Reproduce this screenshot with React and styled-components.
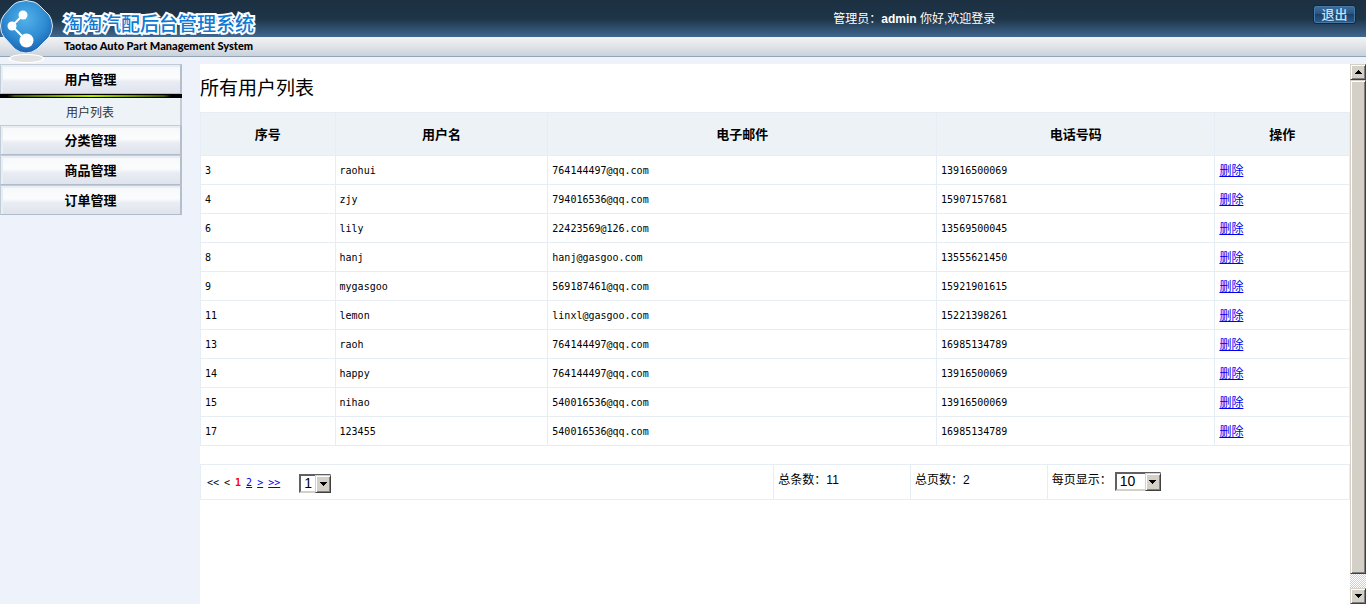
import React from 'react';
import styled, { createGlobalStyle, css } from 'styled-components';

const sans = '"Liberation Sans", "Noto Sans CJK SC", sans-serif';
const mono = '"DejaVu Sans Mono", "Noto Sans CJK SC", monospace';
const line = '#e6edf5';

const GlobalStyle = createGlobalStyle`
  *, *::before, *::after { box-sizing: border-box; }
  body { margin: 0; background: #eef2fb; color: #000; font: 12px/16px ${sans}; }
  a { color: #0000ee; }
`;

const Page = styled.div`
  display: flex;
  flex-direction: column;
  min-height: 100vh;
`;

const Header = styled.header`
  display: flex;
  align-items: flex-start;
  height: 57px;
  margin-bottom: 7px;
  border-bottom: 1px solid #93a3b3;
  background:
    linear-gradient(#1c3042, #1e3447 50%, #3f678f) 0 0 / 100% 37px no-repeat,
    linear-gradient(#f2f2f1, #e0e4e9 50%, #c9d1db) 0 37px / 100% 19px no-repeat;
`;

const Brand = styled.div`
  display: flex;
  flex: 0 0 61%;
  gap: 10px;
`;

const LogoMark = styled.svg`
  flex: none;
  width: 54px;
  height: 63px;
`;

const BrandText = styled.div`
  padding-top: 11px;
`;

const BrandName = styled.div`
  color: #0f7ad4;
  font: 500 19px/24px "Noto Sans CJK SC", sans-serif;
  -webkit-text-stroke: 4px #fff;
  paint-order: stroke fill;
  white-space: nowrap;
`;

const BrandSub = styled.div`
  font: 900 11px/22px Lato, sans-serif;
  white-space: nowrap;
`;

const Greeting = styled.div`
  flex: 1;
  padding-top: 11px;
  color: #fff;
  white-space: nowrap;
`;

const LogoutButton = styled.button`
  width: 43px;
  height: 19px;
  margin: 5px 10px 0 0;
  padding: 0;
  border: 1px solid #0f2840;
  border-radius: 3px;
  background: linear-gradient(#3f6f9f, #28527c 50%, #1b4068 50%, #2d5b8a);
  box-shadow: inset 0 0 0 1px #4779a8;
  color: #c3e3fb;
  font: 500 13px/15px ${sans};
`;

const Body = styled.div`
  display: flex;
  flex: 1;
`;

const Sidebar = styled.nav`
  flex: 0 0 200px;
  padding-right: 18px;
`;

const MenuButton = styled.button`
  display: block;
  width: 100%;
  height: 30px;
  padding: 1px 0 0;
  border: 1px solid #c0ccd8;
  border-right: 2px solid #b4bfcb;
  border-bottom-color: #b0bcc9;
  background: linear-gradient(#f6f8fa, #fbfcfd 45%, #e9ecf3 60%, #dfe3ec);
  box-shadow: inset 1px 1px 0 1px #e9eef4;
  font: bold 13px/27px ${sans};
`;

const ActiveBar = styled.div`
  height: 4px;
  border: solid #000;
  border-width: 1px 0;
  background: linear-gradient(90deg, #000 4%, #3e5400 8%, #b4ee00 50%, #3e5400 90%, #000 94%);
`;

const SubLink = styled.a`
  display: block;
  height: 27px;
  border-right: 2px solid #c3ccd6;
  background: #eef3f7;
  color: #333;
  line-height: 30px;
  text-align: center;
  text-decoration: none;
`;

const Content = styled.main`
  flex: 1;
  min-width: 0;
  background: #fff;
`;

const Title = styled.h1`
  margin: 0;
  padding-top: 2px;
  font: 19px/46px ${sans};
`;

const Table = styled.table`
  width: 100%;
  border-collapse: collapse;
  table-layout: fixed;
  font: 10px/16px ${mono};
  margin-bottom: ${(p) => p.$gap || 0}px;
`;

const Th = styled.th`
  width: ${(p) => p.$share}%;
  height: 43px;
  padding: 2px 0 0;
  border: 1px solid ${line};
  background: #edf2f7;
  font: bold 13px/16px ${sans};
`;

const Td = styled.td`
  height: ${(p) => p.$height || 29}px;
  width: ${(p) => (p.$share ? `${p.$share}%` : 'auto')};
  padding: 2px 4px 0;
  border: 1px solid ${line};
  ${(p) => p.$top && css`
    padding-top: 7px;
    vertical-align: top;
  `}
`;

const ActionLink = styled.a`
  font: 12px/16px ${sans};
`;

const Pager = styled.div`
  display: flex;
  align-items: center;
  gap: 5px;
  padding-left: 2px;
`;

const Current = styled.b`
  color: #f00;
`;

const PageJump = styled.div`
  margin-left: 14px;
`;

const Label = styled.label`
  font: 12px/16px ${sans};
`;

const Total = styled.span`
  font: 12px/16px ${sans};
`;

const PageSize = styled.div`
  display: flex;
  gap: 3px;
`;

const SelectBox = styled.div`
  position: relative;
  width: ${(p) => p.$width}px;
  height: 19px;
`;

const Select = styled.select`
  display: block;
  width: 100%;
  height: 100%;
  padding: 0 0 0 3px;
  border: 2px solid;
  border-color: #606060 #d4d0c8 #d4d0c8 #606060;
  border-radius: 0;
  appearance: none;
  background: #fff;
  color: #000;
  font: 14px/15px ${sans};
`;

const bevel = css`
  border: 1px solid;
  border-color: #d4d0c8 #404040 #404040 #d4d0c8;
  background: #d4d0c8;
  box-shadow: inset 1px 1px 0 #fff, inset -1px -1px 0 #808080;
`;

const SelectArrow = styled.span`
  position: absolute;
  top: 1px;
  right: 0;
  display: flex;
  align-items: center;
  justify-content: center;
  width: 16px;
  height: 18px;
  pointer-events: none;
  ${bevel}
`;

const ScrollBar = styled.div`
  display: flex;
  flex: 0 0 16px;
  flex-direction: column;
  background: repeating-conic-gradient(#d4d0c8 0 25%, #fff 0 50%) 0 0 / 2px 2px;
`;

const ScrollButton = styled.button`
  display: flex;
  align-items: center;
  justify-content: center;
  height: 16px;
  padding: 0;
  ${bevel}
`;

const ScrollThumb = styled.div`
  flex: 1;
  margin-bottom: 14px;
  ${bevel}
`;

function Arrow({ up }) {
  return (
    <svg width="7" height="4" viewBox="0 0 7 4" shapeRendering="crispEdges" aria-hidden="true">
      <path d={up ? 'M3 0h1v1h1v1h1v1h1v1H0V3h1V2h1V1h1z' : 'M0 0h7v1H6v1H5v1H4v1H3V3H2V2H1V1H0z'} />
    </svg>
  );
}

function DropDown({ id, width, options, label }) {
  return (
    <SelectBox $width={width}>
      <Select id={id} aria-label={label}>
        {options.map((o) => <option key={o}>{o}</option>)}
      </Select>
      <SelectArrow><Arrow /></SelectArrow>
    </SelectBox>
  );
}

function Logo() {
  return (
    <LogoMark viewBox="0 0 54 63" aria-hidden="true">
      <defs>
        <radialGradient id="gem" cx="48%" cy="35%" r="65%">
          <stop offset="0" stopColor="#52b2ea" />
          <stop offset="0.6" stopColor="#2f8cd2" />
          <stop offset="1" stopColor="#1a62b0" />
        </radialGradient>
      </defs>
      <ellipse cx="26.5" cy="58.5" rx="18" ry="4.5" fill="#fff" />
      <ellipse cx="26.5" cy="58.5" rx="16" ry="3.5" fill="#e2e2e2" />
      <path
        d="M18 2Q26-1 34 2Q37 3 40 6L49 15Q52 19 52.500 26Q52 33 49 37L37 49Q32 53 26 53Q20 53 15 49L4 37Q0.500 33 0.500 26Q0.500 19 4 15L12 6Q15 3 18 2Z"
        fill="url(#gem)"
        stroke="#dcecf8"
      />
      <path d="M23 15L12 26L27 41" fill="none" stroke="#fff" strokeWidth="2" />
      <circle cx="23" cy="15" r="4.5" fill="#fff" />
      <circle cx="12" cy="26" r="4.5" fill="#fff" />
      <circle cx="26.5" cy="40.5" r="7" fill="#fff" />
    </LogoMark>
  );
}

const columns = [
  ['序号', 11.7],
  ['用户名', 18.5],
  ['电子邮件', 33.8],
  ['电话号码', 24.2],
  ['操作', 11.7],
];

const users = [
  ['3', 'raohui', '764144497@qq.com', '13916500069'],
  ['4', 'zjy', '794016536@qq.com', '15907157681'],
  ['6', 'lily', '22423569@126.com', '13569500045'],
  ['8', 'hanj', 'hanj@gasgoo.com', '13555621450'],
  ['9', 'mygasgoo', '569187461@qq.com', '15921901615'],
  ['11', 'lemon', 'linxl@gasgoo.com', '15221398261'],
  ['13', 'raoh', '764144497@qq.com', '16985134789'],
  ['14', 'happy', '764144497@qq.com', '13916500069'],
  ['15', 'nihao', '540016536@qq.com', '13916500069'],
  ['17', '123455', '540016536@qq.com', '16985134789'],
];

export default function App() {
  return (
    <Page>
      <GlobalStyle />
      <Header>
        <Brand>
          <Logo />
          <BrandText>
            <BrandName>淘淘汽配后台管理系统</BrandName>
            <BrandSub>Taotao Auto Part Management System</BrandSub>
          </BrandText>
        </Brand>
        <Greeting>管理员：<b>admin</b> 你好,欢迎登录</Greeting>
        <LogoutButton type="button">退出</LogoutButton>
      </Header>
      <Body>
        <Sidebar>
          <MenuButton type="button">用户管理</MenuButton>
          <ActiveBar />
          <SubLink href="#users">用户列表</SubLink>
          <MenuButton type="button">分类管理</MenuButton>
          <MenuButton type="button">商品管理</MenuButton>
          <MenuButton type="button">订单管理</MenuButton>
        </Sidebar>
        <Content>
          <Title>所有用户列表</Title>
          <Table $gap={18}>
            <thead>
              <tr>
                {columns.map(([name, share]) => <Th key={name} $share={share}>{name}</Th>)}
              </tr>
            </thead>
            <tbody>
              {users.map((row) => (
                <tr key={row[0]}>
                  {row.map((cell, i) => <Td key={i}>{cell}</Td>)}
                  <Td><ActionLink href="#delete">删除</ActionLink></Td>
                </tr>
              ))}
            </tbody>
          </Table>
          <Table>
            <tbody>
              <tr>
                <Td $height={35} $share={49.9}>
                  <Pager>
                    <span>&lt;&lt;</span>
                    <span>&lt;</span>
                    <Current>1</Current>
                    <a href="#p2">2</a>
                    <a href="#next">&gt;</a>
                    <a href="#last">&gt;&gt;</a>
                    <PageJump><DropDown width={32} options={['1', '2']} label="页码" /></PageJump>
                  </Pager>
                </Td>
                <Td $top $share={11.9}><Total>总条数：11</Total></Td>
                <Td $top $share={11.9}><Total>总页数：2</Total></Td>
                <Td $top $share={26.3}>
                  <PageSize>
                    <Label htmlFor="page-size">每页显示：</Label>
                    <DropDown id="page-size" width={46} options={['10', '20', '50']} />
                  </PageSize>
                </Td>
              </tr>
            </tbody>
          </Table>
        </Content>
        <ScrollBar>
          <ScrollButton type="button" aria-label="向上"><Arrow up /></ScrollButton>
          <ScrollThumb />
          <ScrollButton type="button" aria-label="向下"><Arrow /></ScrollButton>
        </ScrollBar>
      </Body>
    </Page>
  );
}
